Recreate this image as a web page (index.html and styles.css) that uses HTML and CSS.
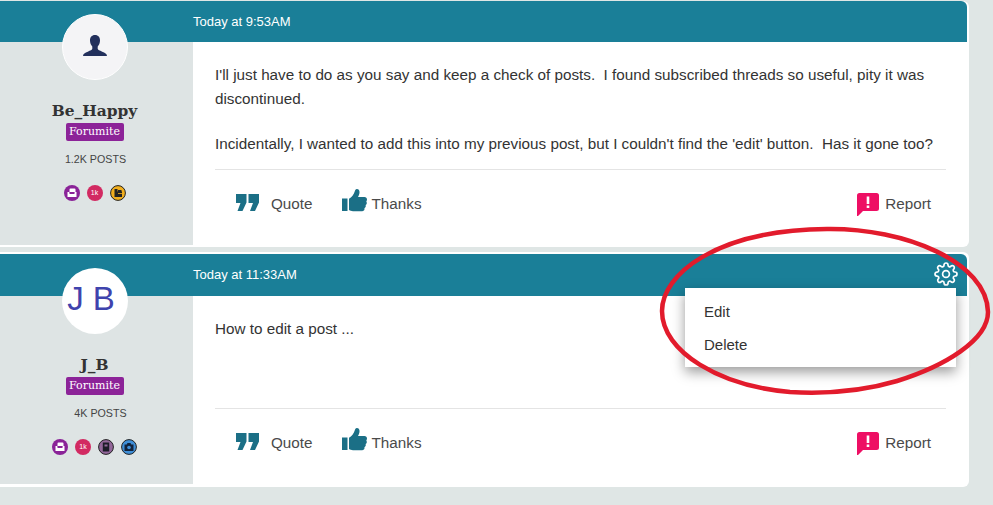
FILE: index.html
```
<!DOCTYPE html>
<html lang="en">
<head>
<meta charset="utf-8">
<title>Forum thread</title>
<link rel="stylesheet" href="styles.css">
</head>
<body>
<svg class="defs" width="0" height="0" aria-hidden="true">
  <symbol id="i-quote" viewBox="0 0 23 17"><path d="M0 0h10.500v8.500L6.500 17H1.500L4.500 9H0zM12.500 0H23v8.500L19 17h-5l3-8h-4.500z"/></symbol>
  <symbol id="i-thumb" viewBox="0 0 25 23"><path d="M0 9.500h5.500V22H0zM7 9.800c2.500-1.500 5-4.300 5.800-7.500.3-1.300.8-2.300 2-2.300 2 0 2.900 1.700 2.700 3.700-.1 1.500-.8 3-1.500 4.300h6.500c1.500 0 2.500 1.100 2.500 2.500 0 .8-.3 1.400-.7 1.900.3.400.5 1 .5 1.500 0 1-.5 1.700-1.200 2.100.1.300.2.700.2 1 0 1-.6 1.800-1.400 2.200.1.300.1.500.1.800 0 1.300-1 2.200-2.400 2.200H11c-1.600 0-2.800-.6-4-1.200z"/></symbol>
  <symbol id="i-report" viewBox="0 0 22 23"><path fill="#ee0f64" d="M2.500 0h17A2.500 2.500 0 0 1 22 2.500v13a2.500 2.500 0 0 1-2.500 2.500H6l-5 5H0V2.500A2.500 2.500 0 0 1 2.500 0z"/><path fill="#fff" d="M9.700 3.500h2.600v7.500H9.700zM9.700 12.500h2.600v2.600H9.700z"/></symbol>
  <symbol id="i-gear" viewBox="0 0 24 24"><g fill="none" stroke="#fff" stroke-width="1.700"><circle cx="12" cy="12" r="3.400"/><path d="M19.400 15a1.650 1.650 0 0 0 .33 1.820l.06.06a2 2 0 0 1 0 2.830 2 2 0 0 1-2.830 0l-.06-.06a1.650 1.650 0 0 0-1.820-.33 1.650 1.650 0 0 0-1 1.510V21a2 2 0 0 1-2 2 2 2 0 0 1-2-2v-.09A1.650 1.650 0 0 0 9 19.400a1.650 1.650 0 0 0-1.820.33l-.06.06a2 2 0 0 1-2.830 0 2 2 0 0 1 0-2.830l.06-.06a1.650 1.650 0 0 0 .33-1.820 1.650 1.650 0 0 0-1.510-1H3a2 2 0 0 1-2-2 2 2 0 0 1 2-2h.09A1.650 1.650 0 0 0 4.600 9a1.650 1.650 0 0 0-.33-1.820l-.06-.06a2 2 0 0 1 0-2.830 2 2 0 0 1 2.830 0l.06.06a1.650 1.650 0 0 0 1.820.33H9a1.650 1.650 0 0 0 1-1.510V3a2 2 0 0 1 2-2 2 2 0 0 1 2 2v.09a1.650 1.650 0 0 0 1 1.510 1.650 1.650 0 0 0 1.820-.33l.06-.06a2 2 0 0 1 2.830 0 2 2 0 0 1 0 2.830l-.06.06a1.650 1.650 0 0 0-.33 1.820V9a1.650 1.650 0 0 0 1.510 1H21a2 2 0 0 1 2 2 2 2 0 0 1-2 2h-.09a1.650 1.650 0 0 0-1.510 1z"/></g></symbol>
  <symbol id="b-chair" viewBox="0 0 16 16"><circle cx="8" cy="8" r="8" fill="#8a2398"/><path fill="#fff" d="M5.500 3.500h5a1 1 0 0 1 1 1V7h-6V4.500a1 1 0 0 1 1-1zM3.500 7h1.300a.8.8 0 0 1 .7.800V9h5V7.800a.8.8 0 0 1 .7-.8h1.300v5h-9z"/></symbol>
  <symbol id="b-folder" viewBox="0 0 16 16"><circle cx="8" cy="8" r="7.400" fill="#f0ae1e" stroke="#222" stroke-width="1"/><path fill="#222" d="M4.500 4h3v2.500H8V5h3.500v1.500H12V12H4.500z"/><path fill="#f0ae1e" d="M8 8h4v.8H8z"/></symbol>
  <symbol id="b-book" viewBox="0 0 16 16"><circle cx="8" cy="8" r="7.400" fill="#93679a" stroke="#222" stroke-width="1"/><path fill="#1c1c28" d="M4.800 3.500h6.400v9H4.800z"/><path fill="#93679a" d="M6.500 5.500h3v2h-3z"/></symbol>
  <symbol id="b-camera" viewBox="0 0 16 16"><circle cx="8" cy="8" r="7.400" fill="#3f8fd8" stroke="#222" stroke-width="1"/><path fill="#12233c" d="M3.500 5.500h2.200L6.500 4h3l.8 1.500h2.200V12h-9z"/><circle cx="8" cy="8.500" r="1.800" fill="#3f8fd8"/></symbol>
</svg>

<main class="thread">
  <article class="post post--first">
    <header class="post-bar">
      <time class="post-time">Today at 9:53AM</time>
    </header>
    <div class="post-body">
      <aside class="author">
        <div class="avatar avatar--icon">
          <svg class="avatar-person" viewBox="0 0 24 24"><path fill="#22305c" d="M12 0c3.300 0 5 2.300 5 5.500 0 2.500-1 4.500-2.300 6v2.300c0 .9 2 1.800 4.500 2.900 2.700 1.200 4.800 2 4.800 4.300H0c0-2.300 2.100-3.100 4.800-4.300 2.500-1.100 4.500-2 4.500-2.900v-2.300C8 10 7 8 7 5.500 7 2.300 8.700 0 12 0z"/></svg>
        </div>
        <h2 class="author-name">Be_Happy</h2>
        <span class="rank">Forumite</span>
        <p class="post-count">1.2K POSTS</p>
        <div class="medals">
          <svg class="medal"><use href="#b-chair"/></svg>
          <span class="medal medal--k">1k</span>
          <svg class="medal"><use href="#b-folder"/></svg>
        </div>
      </aside>
      <section class="content">
        <div class="message">
          <p>I'll just have to do as you say and keep a check of posts.&nbsp; I found subscribed threads so useful, pity it was discontinued.</p>
          <p>Incidentally, I wanted to add this into my previous post, but I couldn't find the 'edit' button.&nbsp; Has it gone too?</p>
        </div>
        <footer class="actions">
          <a class="action action--quote"><svg class="icon-quote"><use href="#i-quote"/></svg>Quote</a>
          <a class="action action--thanks"><svg class="icon-thumb"><use href="#i-thumb"/></svg>Thanks</a>
          <a class="action action--report"><svg class="icon-report"><use href="#i-report"/></svg>Report</a>
        </footer>
      </section>
    </div>
  </article>

  <article class="post">
    <header class="post-bar">
      <time class="post-time">Today at 11:33AM</time>
      <svg class="gear"><use href="#i-gear"/></svg>
    </header>
    <div class="post-body">
      <aside class="author">
        <div class="avatar avatar--initials">J B</div>
        <h2 class="author-name">J_B</h2>
        <span class="rank">Forumite</span>
        <p class="post-count post-count--offset">4K POSTS</p>
        <div class="medals">
          <svg class="medal"><use href="#b-chair"/></svg>
          <span class="medal medal--k">1k</span>
          <svg class="medal"><use href="#b-book"/></svg>
          <svg class="medal"><use href="#b-camera"/></svg>
        </div>
      </aside>
      <section class="content">
        <div class="message">
          <p>How to edit a post ...</p>
        </div>
        <footer class="actions">
          <a class="action action--quote"><svg class="icon-quote"><use href="#i-quote"/></svg>Quote</a>
          <a class="action action--thanks"><svg class="icon-thumb"><use href="#i-thumb"/></svg>Thanks</a>
          <a class="action action--report"><svg class="icon-report"><use href="#i-report"/></svg>Report</a>
        </footer>
      </section>
    </div>
    <ul class="menu">
      <li>Edit</li>
      <li>Delete</li>
    </ul>
  </article>
</main>

<svg class="annotation" viewBox="0 0 993 505" aria-hidden="true">
  <path d="M827 229C905 228 987 262 988 312C988 340 945 366 897 381C860 392 825 394 790 392C720 386 662 352 662 311C662 275 715 230 827 229Z"/>
</svg>
</body>
</html>
```
FILE: styles.css
```
* { box-sizing: border-box; }
html, body { margin: 0; padding: 0; }
body {
  position: relative;
  width: 993px;
  height: 505px;
  overflow: hidden;
  background: #dfe6e5;
  color: #333;
  font-family: "Liberation Sans", Arial, sans-serif;
}
.defs { position: absolute; }
.thread {
  display: flex;
  flex-direction: column;
  gap: 5px;
  padding-top: 1px;
}
.post {
  position: relative;
  width: 969px;
  padding: 2px 2px 3px 0;
  background: #fff;
  border-radius: 0 6px 6px 0;
}
.post--first { padding-top: 0; padding-bottom: 2px; }
.post-bar {
  display: flex;
  align-items: center;
  justify-content: space-between;
  height: 42px;
  padding: 0 9px 1px 193px;
  background: #1a7f98;
  border-radius: 0 6px 0 0;
}
.post--first .post-bar { height: 41px; padding-bottom: 0; }
.post-time {
  color: #fff;
  font-size: 13px;
}
.gear { width: 24px; height: 24px; margin-top: -1px; }
.post-body {
  display: flex;
  min-height: 188px;
}
.author {
  flex: 0 0 193px;
  display: flex;
  flex-direction: column;
  align-items: center;
  padding-right: 4px;
  background: #dee4e4;
}
.avatar {
  display: flex;
  align-items: center;
  justify-content: center;
  width: 66px;
  height: 66px;
  margin-top: -28px;
  border-radius: 50%;
  background: #fff;
}
.avatar--icon {
  background: #f4f4f6;
  border: 1px solid #fff;
}
.avatar--initials {
  padding: 0 7px 5px 0;
  color: #3f43ad;
  font-size: 33px;
}
.avatar-person { width: 24px; height: 24px; }
.author-name {
  margin: 22px 0 0;
  font-family: "DejaVu Serif", serif;
  font-size: 15.400px;
  line-height: 18px;
  font-weight: 700;
  color: #333;
}
.rank {
  margin-top: 3px;
  width: 58px;
  height: 18px;
  background: #8c2398;
  border-radius: 2px;
  color: #fff;
  font-family: "DejaVu Serif", serif;
  font-size: 11px;
  line-height: 18px;
  text-align: center;
  white-space: nowrap;
}
.post-count {
  margin: 11px 0 0;
  padding-left: 2px;
  font-size: 10.700px;
  line-height: 14px;
  color: #444;
}
.post-count--offset { padding-left: 12px; }
.medals {
  display: flex;
  gap: 7px;
  margin-top: 19px;
}
.medal {
  display: block;
  width: 16px;
  height: 16px;
}
.medal--k {
  border-radius: 50%;
  background: #d22a62;
  color: #fff;
  font-size: 7px;
  line-height: 16px;
  text-align: center;
}
.content {
  flex: 1;
  display: flex;
  flex-direction: column;
  padding: 0 21px 0 22px;
}
.message {
  flex: 1;
  padding: 21px 0 13px;
  font-size: 15.250px;
  line-height: 24px;
  color: #333;
}
.message p { margin: 0 0 21px; }
.message p:last-child { margin-bottom: 0; }
.actions {
  display: flex;
  align-items: center;
  height: 76px;
  padding: 0 15px 8px 21px;
  border-top: 1px solid #e4e4e4;
  font-size: 15.250px;
  color: #4a4a4a;
}
.action {
  display: flex;
  align-items: center;
}
.action--thanks { margin-left: 29px; }
.action--report { margin-left: auto; }
.icon-quote { width: 23px; height: 17px; margin: -2px 12px 0 0; fill: #1b6f86; }
.icon-thumb { width: 25px; height: 23px; margin: -6px 5px 0 0; fill: #1b6f86; }
.icon-report { width: 22px; height: 23px; margin: 2px 6px 0 0; }
.menu {
  position: absolute;
  top: 36px;
  left: 685px;
  width: 271px;
  height: 79px;
  margin: 0;
  padding: 7px 0 0 19px;
  list-style: none;
  background: #fff;
  box-shadow: 0 5px 12px rgba(0, 0, 0, .4);
  font-size: 15px;
  color: #333;
}
.menu li { line-height: 33px; }
.annotation {
  position: absolute;
  top: 0;
  left: 0;
  width: 993px;
  height: 505px;
  pointer-events: none;
}
.annotation path {
  fill: none;
  stroke: #e21b2c;
  stroke-width: 4.500px;
}
```
